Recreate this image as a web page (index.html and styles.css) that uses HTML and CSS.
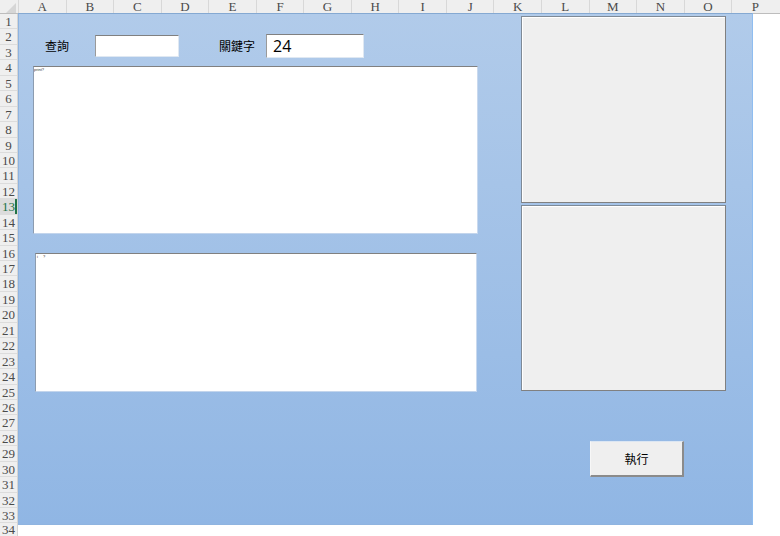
FILE: index.html
```html
<!DOCTYPE html>
<html lang="en">
<head>
    <meta charset="UTF-8">
    <meta name="viewport" content="width=device-width, initial-scale=1.0">
    <title>查詢</title>
    <link rel="stylesheet" href="styles.css">
</head>
<body>
    <div class="sheet">
        <div class="col-head">
            <div class="corner"><span class="corner-mark"></span></div>
            <div class="col">A</div><div class="col">B</div><div class="col">C</div><div class="col">D</div>
            <div class="col">E</div><div class="col">F</div><div class="col">G</div><div class="col">H</div>
            <div class="col">I</div><div class="col">J</div><div class="col">K</div><div class="col">L</div>
            <div class="col">M</div><div class="col">N</div><div class="col">O</div><div class="col">P</div>
        </div>
        <div class="row-head">
            <div class="row">1</div><div class="row">2</div><div class="row">3</div><div class="row">4</div>
            <div class="row">5</div><div class="row">6</div><div class="row">7</div><div class="row">8</div>
            <div class="row">9</div><div class="row">10</div><div class="row">11</div><div class="row">12</div>
            <div class="row active">13</div><div class="row">14</div><div class="row">15</div><div class="row">16</div>
            <div class="row">17</div><div class="row">18</div><div class="row">19</div><div class="row">20</div>
            <div class="row">21</div><div class="row">22</div><div class="row">23</div><div class="row">24</div>
            <div class="row">25</div><div class="row">26</div><div class="row">27</div><div class="row">28</div>
            <div class="row">29</div><div class="row">30</div><div class="row">31</div><div class="row">32</div>
            <div class="row">33</div><div class="row last">34</div>
        </div>

        <!-- form drawn over the cells -->
        <div class="panel">
            <div class="left">
                <div class="search-row">
                    <span class="label label-query">查詢</span>
                    <div class="field field-query"></div>
                    <span class="label label-key">關鍵字</span>
                    <div class="field field-key">24</div>
                </div>
                <div class="box box-top"><span class="tiny">print?</span></div>
                <div class="box box-bottom"><span class="tiny tiny-gap">i ?</span></div>
            </div>
            <div class="right">
                <div class="pic pic-top"></div>
                <div class="pic pic-bottom"></div>
                <button class="run">執行</button>
            </div>
        </div>
    </div>
</body>
</html>
```

FILE: styles.css
```css
html, body {
    margin: 0;
    padding: 0;
    height: 100%;
    background: #fff;
    overflow: hidden;
}
.sheet {
    position: relative;
    width: 780px;
    height: 536px;
    font-family: "Liberation Serif", serif;
    color: #4a4a4a;
}

/* headers */
.col-head {
    display: flex;
    height: 14px;
    background: #efefef;
    border-bottom: 1px solid #bdbdbd;
    box-sizing: border-box;
}
.corner {
    position: relative;
    width: 18px;
    flex: none;
}
.corner-mark {
    position: absolute;
    right: 2px;
    bottom: 0;
    border-left: 10px solid transparent;
    border-bottom: 10px solid #d6d6d6;
}
.col {
    width: 47.55px;
    flex: none;
    box-sizing: border-box;
    border-left: 1px solid #d8d8d8;
    font-size: 13px;
    line-height: 13px;
    text-align: center;
}
.row-head {
    width: 18px;
    background: #efefef;
    border-right: 1px solid #d4d4d4;
    box-sizing: border-box;
    height: 522px;
}
.row {
    height: 15.45px;
    box-sizing: border-box;
    border-bottom: 1px solid #dcdcdc;
    font-size: 13px;
    line-height: 15px;
    text-align: center;
}
.row.active {
    background: #dcdcdc;
    color: #217346;
    box-shadow: inset -2px 0 0 #217346;
}
.row.last {
    height: 13px;
    line-height: 13px;
    border-bottom: none;
}

/* form */
.panel {
    position: absolute;
    top: 13px;
    left: 18px;
    width: 735px;
    height: 512px;
    box-sizing: border-box;
    display: flex;
    background: linear-gradient(#b1cbea, #90b6e4);
    border: 1px solid #8fb4e0;
    border-right-color: #8fbdf0;
    border-top-color: #85a9d2;
    font-family: "Noto Sans CJK TC", "Noto Sans", sans-serif;
    color: #000;
}
.left {
    width: 502px;
    flex: none;
    padding: 20px 0 0 14px;
    box-sizing: border-box;
}
.search-row {
    display: flex;
    align-items: center;
    height: 24px;
    margin-bottom: 8px;
}
.label {
    font-size: 12px;
    line-height: 24px;
}
.label-query {
    margin-left: 12px;
    width: 50px;
}
.label-key {
    margin-left: 40px;
    width: 47px;
}
.field {
    background: #fff;
    box-sizing: border-box;
    border: 1px solid #dfe8f2;
    border-top: 1px solid #808080;
    border-left: 1px solid #9a9a9a;
}
.field-query {
    width: 84px;
    height: 22px;
}
.field-key {
    width: 98px;
    height: 24px;
    padding-left: 6px;
    font-family: "Open Sans", sans-serif;
    font-size: 16px;
    line-height: 22px;
}
.box {
    background: #fff;
    box-sizing: border-box;
    border-top: 1px solid #808080;
    border-left: 1px solid #8c9cb0;
    border-right: 1px solid #c9d9ee;
    border-bottom: 1px solid #c3d5ec;
    overflow: hidden;
}
.box-top {
    width: 445px;
    height: 168px;
}
.box-bottom {
    width: 442px;
    height: 139px;
    margin: 19px 0 0 2px;
}
.tiny {
    display: block;
    font-family: "Liberation Sans", sans-serif;
    font-size: 4px;
    line-height: 5px;
    color: #333;
}
.tiny-gap {
    padding-left: 1px;
    word-spacing: 4px;
}
.right {
    padding-top: 2px;
}
.pic {
    width: 205px;
    box-sizing: border-box;
    background: #efefef;
    border: 1px solid #808080;
    border-top-color: #7f8a96;
    border-left-color: #7f8a96;
    box-shadow: inset 1px 1px 0 #fff;
}
.pic-top {
    height: 187px;
}
.pic-bottom {
    height: 186px;
    margin-top: 2px;
}
.run {
    display: block;
    width: 94px;
    height: 36px;
    margin: 50px 0 0 69px;
    padding: 0;
    background: #efefef;
    border: none;
    border-top: 1px solid #dbe6f3;
    border-left: 1px solid #f7f7f7;
    border-right: 2px solid #8b8b8b;
    border-bottom: 2px solid #8b8b8b;
    box-sizing: border-box;
    font-family: "Noto Sans CJK TC", sans-serif;
    font-size: 12px;
    color: #000;
}
```
